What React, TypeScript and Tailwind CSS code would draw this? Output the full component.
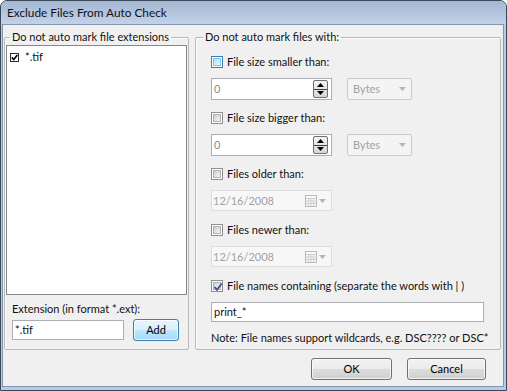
import React from 'react';

// Vista-style checkbox, 12px
function Check({ checked = false, hot = false }: { checked?: boolean; hot?: boolean }) {
  return (
    <span
      className={`relative flex w-[12px] h-[12px] shrink-0 p-px bg-white border ${
        hot ? 'border-[#3c7fb1]' : 'border-[#8e8f8f]'
      }`}
    >
      <span
        className={`block w-full h-full border ${
          hot
            ? 'border-[#79c6f9] bg-gradient-to-br from-[#b1dffd] to-[#e9f7fe]'
            : 'border-[#aeb3b9] bg-gradient-to-br from-[#cbcfd5] to-[#f6f6f6]'
        }`}
      />
      {checked && (
        <svg className="absolute left-[1px] top-[1px]" width="10" height="10" viewBox="0 0 10 10">
          <path d="M1.5 5 L4 7.8 L8.8 1.5" fill="none" stroke="#3b4f8a" strokeWidth="1.8" />
        </svg>
      )}
    </span>
  );
}

function CheckRow({ label, checked, hot }: { label: string; checked?: boolean; hot?: boolean }) {
  return (
    <div className="flex items-center h-4 gap-[4px]">
      <Check checked={checked} hot={hot} />
      <span>{label}</span>
    </div>
  );
}

function Arrow({ down = false, color = '#000' }: { down?: boolean; color?: string }) {
  return (
    <svg width="7" height="4" viewBox="0 0 7 4">
      <path d={down ? 'M0 0 H7 L3.5 4 Z' : 'M0 4 H7 L3.5 0 Z'} fill={color} />
    </svg>
  );
}

function SpinRow() {
  return (
    <div className="flex items-center gap-[15px] mt-2">
      <div className="flex items-center justify-between w-[121px] h-[22px] border border-[#abadb3] bg-white">
        <span className="pl-[2px] text-[#8d8d8d]">0</span>
        <div className="flex flex-col items-center w-[15px] h-[18px] mr-[3px] border border-[#6f6f6f] rounded-[2px] bg-gradient-to-b from-[#f3f3f3] to-[#d6d6d6]">
          <div className="flex-1 flex items-center justify-center">
            <Arrow />
          </div>
          <div className="w-full h-px bg-[#3d3d3d]" />
          <div className="flex-1 flex items-center justify-center">
            <Arrow down />
          </div>
        </div>
      </div>
      <div className="flex items-center justify-between w-[65px] h-[22px] border border-[#cbcbcb] rounded-[2px] bg-[#f4f4f4] px-[5px]">
        <span className="text-[#a3a3a3]">Bytes</span>
        <Arrow down color="#b5b5b5" />
      </div>
    </div>
  );
}

function DateRow() {
  return (
    <div className="flex items-center justify-between w-[121px] h-[21px] mt-2 border border-[#dedede] bg-[#f7f7f7] pl-[1px] pr-[5px]">
      <span className="text-[#a3a3a3]">12/16/2008</span>
      <div className="flex items-center gap-[2px]">
        <svg width="12" height="12" viewBox="0 0 12 12">
          <rect x="0.5" y="0.5" width="11" height="11" fill="#fafafa" stroke="#b9b9b9" />
          <path d="M1 3.5 H11 M1 6 H11 M1 8.5 H11 M3.5 3 V11 M6 3 V11 M8.5 3 V11" stroke="#d0d0d0" strokeWidth="1" />
        </svg>
        <Arrow down color="#b5b5b5" />
      </div>
    </div>
  );
}

function PushButton({ label, width, isDefault }: { label: string; width: string; isDefault?: boolean }) {
  return (
    <button
      className={`${width} h-[22px] rounded-[3px] border ${
        isDefault
          ? 'border-[#3c7fb1] bg-[linear-gradient(#eaf6fd,#d9f0fc_50%,#bee6fd_50%,#a7d9f5)]'
          : 'border-[#707070] bg-[linear-gradient(#f2f2f2,#ebebeb_50%,#dddddd_50%,#cfcfcf)]'
      } text-black shadow-[inset_0_0_0_1px_rgba(255,255,255,0.7)]`}
    >
      {label}
    </button>
  );
}

export default function App() {
  return (
    <div className="w-[507px] h-[391px] bg-white font-['Lato',sans-serif] text-[11px] text-[#111] leading-4">
      <div className="flex flex-col w-full h-full rounded-t-[7px] border border-[#3b4756] bg-[#b7cde5] overflow-hidden">
        {/* title bar */}
        <div className="flex items-center h-[23px] pl-[6px] bg-gradient-to-b from-[#a4b8d1] to-[#c3d1ea] text-[11.8px]">
          Exclude Files From Auto Check
        </div>

        {/* client area */}
        <div className="flex-1 flex flex-col ml-[1px] mr-[2px] mb-[3px] bg-[#f0f0f0] border border-[#8195ad] pt-[4px]">
          <div className="flex gap-[6px] pl-[1px]">
            {/* left group */}
            <fieldset className="w-[185px] h-[321px] border border-[#b9b9b9] rounded-[2px] shadow-[inset_1px_1px_0_#ffffff]">
              <legend className="ml-[5px] px-[2px]">Do not auto mark file extensions</legend>
              <div className="mx-px h-[250px] border border-[#828790] bg-white pt-[3px] pl-[2px]">
                <div className="flex items-center gap-[6px] h-4">
                  <span className="relative w-[9px] h-[9px] border border-[#2b2b2b] bg-white ml-[1px]">
                    <svg className="absolute left-0 top-0" width="7" height="7" viewBox="0 0 7 7">
                      <path d="M0.8 3.4 L2.8 5.6 L6.3 1" fill="none" stroke="#000" strokeWidth="1.6" />
                    </svg>
                  </span>
                  <span>*.tif</span>
                </div>
              </div>
              <div className="pl-[7px] mt-[6px]">Extension (in format *.ext):</div>
              <div className="flex items-center gap-[9px] pl-[7px] mt-[2px]">
                <div className="w-[112px] h-[20px] border border-[#abadb3] bg-white pl-[2px] flex items-center">
                  *.tif
                </div>
                <PushButton label="Add" width="w-[46px]" isDefault />
              </div>
            </fieldset>

            {/* right group */}
            <fieldset className="w-[306px] h-[321px] border border-[#b9b9b9] rounded-[2px] shadow-[inset_1px_1px_0_#ffffff] pl-[15px]">
              <legend className="ml-[-8px] px-[2px]">Do not auto mark files with:</legend>
              <div className="pt-[9px]">
                <CheckRow label="File size smaller than:" hot />
                <SpinRow />
                <div className="mt-[10px]">
                  <CheckRow label="File size bigger than:" />
                </div>
                <SpinRow />
                <div className="mt-[10px]">
                  <CheckRow label="Files older than:" />
                </div>
                <DateRow />
                <div className="mt-[11px]">
                  <CheckRow label="Files newer than:" />
                </div>
                <DateRow />
                <div className="mt-[11px]">
                  <CheckRow label="File names containing (separate the words with | )" checked />
                </div>
                <div className="w-[273px] h-[20px] mt-2 border border-[#abadb3] bg-white pl-[2px] flex items-center">
                  print_*
                </div>
                <div className="mt-2 whitespace-nowrap">Note: File names support wildcards, e.g. DSC???? or DSC*</div>
              </div>
            </fieldset>
          </div>

          {/* buttons */}
          <div className="flex justify-end gap-[15px] mt-[8px] pr-[17px]">
            <PushButton label="OK" width="w-[81px]" />
            <PushButton label="Cancel" width="w-[79px]" />
          </div>
        </div>
      </div>
    </div>
  );
}
